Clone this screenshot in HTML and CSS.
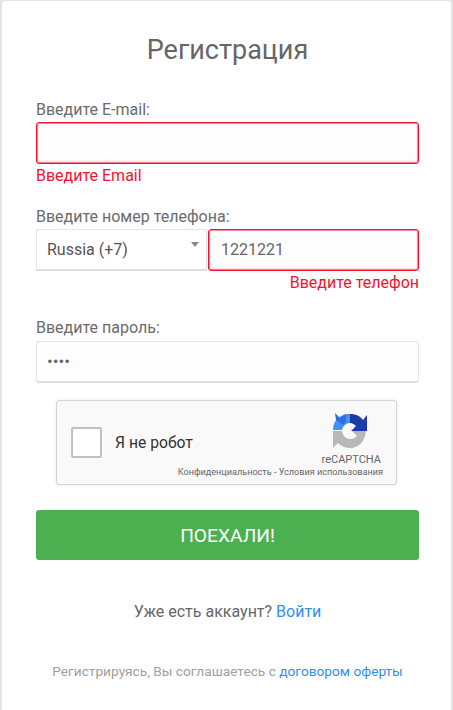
FILE: index.html
```html
<!DOCTYPE html>
<html lang="ru">
<head>
  <meta charset="UTF-8" />
  <title>Регистрация</title>
  <link rel="stylesheet" href="styles.css">
</head>
<body>
  <div class="reg-box">
    <h1>Регистрация</h1>

    <div class="section">
      <label class="label">Введите E-mail:</label>
      <div class="field field-error"></div>
      <div class="error">Введите Email</div>
    </div>

    <div class="section section-phone">
      <label class="label">Введите номер телефона:</label>
      <div class="phone-row">
        <div class="select">Russia (+7)<span class="caret"></span></div>
        <div class="field field-error phone-input">1221221</div>
      </div>
      <div class="error error-right">Введите телефон</div>
    </div>

    <div class="section section-pass">
      <label class="label label-pass">Введите пароль:</label>
      <div class="field pass-input">••••</div>
    </div>

    <div class="captcha">
      <div class="captcha-check"></div>
      <div class="captcha-text">Я не робот</div>
      <div class="captcha-brand">
        <svg class="captcha-logo" width="36" height="36" viewBox="0 0 36 36">
          <path fill="#4a90f2" d="M1 17 C1 8 7 2 15 1 L18 1 L18 10 C14 10 11 13 10 17 Z"/>
          <path fill="#2f6fe0" d="M3 0 L8 5 L14 1 L14 9 L11 12 L4 7 Z"/>
          <path fill="#1c3aa9" d="M18 1 C24 1 28 3 31 7 L35 2 L35 18 L19 18 L24 13 C22 11 20 10 18 10 Z"/>
          <path fill="#b8b8b8" d="M1 18 L10 18 C11 23 14 26 18 26 C21 26 23 25 25 23 L20 18 L34 18 C33 28 27 35 18 35 C13 35 9 33 6 30 L1 35 Z"/>
        </svg>
        <div class="captcha-name">reCAPTCHA</div>
        <div class="captcha-links">Конфиденциальность - Условия использования</div>
      </div>
    </div>

    <button class="go-btn">ПОЕХАЛИ!</button>

    <div class="login-line">Уже есть аккаунт? <a href="#">Войти</a></div>
    <div class="offer-line">Регистрируясь, Вы соглашаетесь с <a href="#">договором оферты</a></div>
  </div>
</body>
</html>
```
FILE: styles.css
```css
body {
  font-family: 'Roboto', sans-serif;
  margin: 0;
  background: #e4e4e4;
  color: #666;
  height: 710px;
  overflow: hidden;
}
.reg-box {
  margin: 1px 2px 0;
  height: 709px;
  box-sizing: border-box;
  background: #fff;
  padding: 0 32px 0 34px;
  border-radius: 3px 3px 0 0;
}
h1 {
  font-size: 27px;
  font-weight: 400;
  line-height: 30px;
  color: #666;
  text-align: center;
  margin: 0;
  padding-top: 34px;
  height: 65px;
  box-sizing: content-box;
}
.label {
  display: block;
  font-size: 16px;
  line-height: 20px;
  height: 22px;
  color: #6b6b6b;
}
.label-pass {
  height: 23px;
}
.section-phone {
  margin-top: 21px;
}
.section-pass {
  margin-top: 25px;
}
.field {
  height: 42px;
  box-sizing: border-box;
  background: #fdfdfd;
  border: 1px solid #e4e4e4;
  border-bottom: 2px solid #ddd;
  border-radius: 3px;
  font-size: 16px;
  line-height: 38px;
  color: #666;
}
.field-error {
  border: 1px solid #f0142f;
  box-shadow: inset 0 0 0 1px rgba(240, 20, 47, 0.45), inset 0 -1px 3px rgba(240, 20, 47, 0.3);
  line-height: 40px;
}
.error {
  font-size: 16px;
  line-height: 20px;
  margin-top: 2px;
  color: #f0142f;
}
.error-right {
  text-align: right;
}
.phone-row {
  display: flex;
  gap: 1px;
}
.select {
  position: relative;
  width: 171px;
  height: 42px;
  box-sizing: border-box;
  background: #fff;
  border: 1px solid #e4e4e4;
  border-bottom: 2px solid #ddd;
  padding-left: 10px;
  font-size: 16px;
  line-height: 39px;
  color: #555;
}
.caret {
  position: absolute;
  top: 12px;
  right: 7px;
  border-left: 4px solid transparent;
  border-right: 4px solid transparent;
  border-top: 5px solid #888;
}
.phone-input {
  flex: 1;
  padding-left: 12px;
  color: #666;
}
.pass-input {
  padding-left: 10px;
  font-size: 17px;
  color: #666;
}
.captcha {
  display: flex;
  align-items: center;
  position: relative;
  width: 341px;
  height: 85px;
  box-sizing: border-box;
  margin: 17px 0 0 20px;
  background: #f9f9f9;
  border: 1px solid #d3d3d3;
  border-radius: 3px;
  box-shadow: 0 0 4px rgba(0, 0, 0, 0.08);
  padding-left: 14px;
}
.captcha-check {
  width: 31px;
  height: 31px;
  box-sizing: border-box;
  background: #fff;
  border: 2px solid #c1c1c1;
  border-radius: 2px;
}
.captcha-text {
  margin-left: 13px;
  font-size: 15.7px;
  color: #333;
}
.captcha-logo {
  position: absolute;
  top: 12px;
  right: 28px;
}
.captcha-name {
  position: absolute;
  top: 52px;
  right: 15px;
  font-size: 11px;
  color: #666;
}
.captcha-links {
  position: absolute;
  top: 66px;
  right: 13px;
  font-size: 9.1px;
  white-space: nowrap;
  color: #666;
}
.go-btn {
  display: block;
  width: 100%;
  height: 50px;
  margin-top: 25px;
  background-color: #4caf50;
  color: #fff;
  border: none;
  border-radius: 3px;
  font-family: 'Roboto', sans-serif;
  font-size: 19.2px;
}
.login-line {
  text-align: center;
  font-size: 16px;
  line-height: 20px;
  margin-top: 42px;
  color: #666;
}
.offer-line {
  text-align: center;
  font-size: 13.7px;
  line-height: 18px;
  margin-top: 40px;
  color: #a0a0a0;
}
a {
  color: #2f8ff0;
  text-decoration: none;
}
```
